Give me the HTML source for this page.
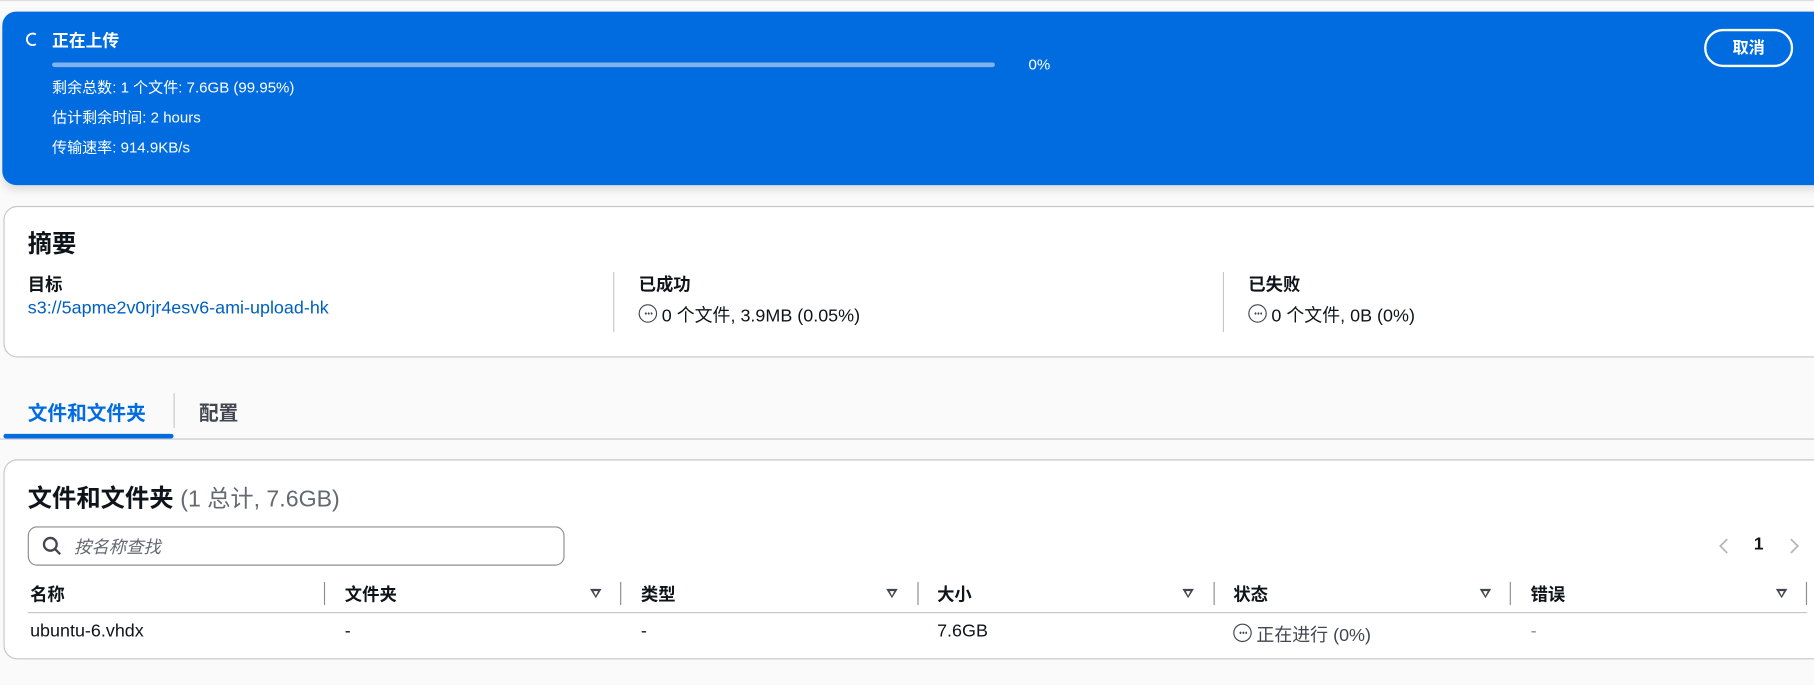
<!DOCTYPE html>
<html><head><meta charset="utf-8"><style>
*{box-sizing:border-box;margin:0;padding:0}
html,body{width:1814px;height:684px;overflow:hidden;background:#fafafa}
#w{position:absolute;left:0;top:0;width:1568px;height:592px;transform:scale(1.15689);transform-origin:0 0;font-family:"Liberation Sans","Noto Sans CJK SC",sans-serif;color:#0f141a}
.a{position:absolute;white-space:nowrap}
.banner{position:absolute;left:2px;top:10px;width:1580px;height:150px;background:#006ce0;border-radius:12px;box-shadow:0 4px 8px rgba(0,0,0,.12)}
.wt{color:#fff;font-size:13px}
.card{position:absolute;left:3px;width:1580px;background:#fff;border:1px solid #c6c6cd;border-radius:12px}
.lbl{font-size:15px;font-weight:bold}
.val{font-size:15.5px}
.vd{position:absolute;width:1px;background:#c6c6cd}
.th{font-size:15px;font-weight:bold;top:503px}
.tri{position:absolute;top:509px;width:0;height:0;border-left:5px solid transparent;border-right:5px solid transparent;border-top:8px solid #424650}
.tri:after{content:"";position:absolute;left:-2.5px;top:-6.5px;border-left:2.5px solid transparent;border-right:2.5px solid transparent;border-top:4px solid #fff}
.td{font-size:15.5px;top:537px}
.wi{padding-left:20px}
.ic{position:absolute;left:0;top:2px;display:flex;align-items:center;justify-content:center;width:16px;height:16px;border:1.5px solid #424650;border-radius:50%}
.ic i{display:block;width:7px;height:2px;background:radial-gradient(circle,#424650 0.9px,transparent 1px) 0 0/2.5px 2px repeat-x}
</style></head><body><div id="w">
<div style="position:absolute;left:0;top:0;width:1568px;height:1px;background:#ddd"></div>
<div class="banner"></div>
<svg class="a" style="left:21px;top:27px" width="14" height="14" viewBox="0 0 14 14"><path d="M10 2.8 A5 5 0 1 0 10 11.2" fill="none" stroke="#fff" stroke-width="1.6"/></svg>
<div class="a" style="left:45px;top:24px;color:#fff;font-size:14.5px;font-weight:bold">正在上传</div>
<div class="a" style="left:45px;top:54px;width:815px;height:4px;background:#7fb2ee;border-radius:2px"></div>
<div class="a wt" style="left:889px;top:48px">0%</div>
<div class="a wt" style="left:45px;top:65px">剩余总数: 1 个文件: 7.6GB (99.95%)</div>
<div class="a wt" style="left:45px;top:91px">估计剩余时间: 2 hours</div>
<div class="a wt" style="left:45px;top:117px">传输速率: 914.9KB/s</div>
<div class="a" style="left:1473px;top:25px;width:77px;height:33px;border:2px solid #fff;border-radius:17px;color:#fff;font-size:14px;font-weight:bold;text-align:center;line-height:29px">取消</div>

<div class="card" style="top:178px;height:131px"></div>
<div class="a" style="left:24px;top:195px;font-size:21px;font-weight:bold">摘要</div>
<div class="a lbl" style="left:24px;top:235px">目标</div>
<div class="a val" style="left:24px;top:258px;color:#0060c0">s3://5apme2v0rjr4esv6-ami-upload-hk</div>
<div class="vd" style="left:530px;top:235px;height:52px"></div>
<div class="a lbl" style="left:552px;top:235px">已成功</div>
<div class="a val wi" style="left:552px;top:261px"><span class="ic"><i></i></span>0 个文件, 3.9MB (0.05%)</div>
<div class="vd" style="left:1057px;top:235px;height:52px"></div>
<div class="a lbl" style="left:1079px;top:235px">已失败</div>
<div class="a val wi" style="left:1079px;top:261px"><span class="ic"><i></i></span>0 个文件, 0B (0%)</div>

<div class="a" style="left:24px;top:343px;font-size:17px;font-weight:bold;color:#006ce0">文件和文件夹</div>
<div class="a" style="left:3px;top:375px;width:147px;height:4px;background:#006ce0;border-radius:2px"></div>
<div class="vd" style="left:150px;top:340px;height:30px"></div>
<div class="a" style="left:172px;top:343px;font-size:17px;font-weight:bold;color:#424650">配置</div>
<div class="a" style="left:0;top:379px;width:1568px;height:1px;background:#c6c6cd"></div>

<div class="card" style="top:397px;height:173px"></div>
<div class="a" style="left:24px;top:415px;font-size:21px;font-weight:bold">文件和文件夹 <span style="font-weight:normal;color:#656871;font-size:20px">(1 总计, 7.6GB)</span></div>
<div class="a" style="left:24px;top:455px;width:464px;height:34px;border:1px solid #8c8c94;border-radius:8px"></div>
<svg class="a" style="left:36px;top:463px" width="18" height="18" viewBox="0 0 18 18"><circle cx="7.5" cy="7.5" r="5.5" fill="none" stroke="#424650" stroke-width="2"/><path d="M11.5 11.5 L16 16" stroke="#424650" stroke-width="2"/></svg>
<div class="a" style="left:64px;top:462px;font-size:15px;font-style:italic;color:#656871">按名称查找</div>
<svg class="a" style="left:1485px;top:464px" width="10" height="16" viewBox="0 0 10 16"><path d="M8 2 L2 8 L8 14" fill="none" stroke="#b4b4bb" stroke-width="1.5"/></svg>
<div class="a" style="left:1516px;top:462px;font-size:15px;font-weight:bold">1</div>
<svg class="a" style="left:1546px;top:464px" width="10" height="16" viewBox="0 0 10 16"><path d="M2 2 L8 8 L2 14" fill="none" stroke="#b4b4bb" stroke-width="1.5"/></svg>

<div class="a th" style="left:26px">名称</div>
<div class="vd" style="left:280px;top:503px;height:20px;background:#8c8c94"></div>
<div class="a th" style="left:298px">文件夹</div><div class="tri" style="left:510px"></div>
<div class="vd" style="left:536px;top:503px;height:20px;background:#8c8c94"></div>
<div class="a th" style="left:554px">类型</div><div class="tri" style="left:766px"></div>
<div class="vd" style="left:793px;top:503px;height:20px;background:#8c8c94"></div>
<div class="a th" style="left:810px">大小</div><div class="tri" style="left:1022px"></div>
<div class="vd" style="left:1049px;top:503px;height:20px;background:#8c8c94"></div>
<div class="a th" style="left:1066px">状态</div><div class="tri" style="left:1279px"></div>
<div class="vd" style="left:1305px;top:503px;height:20px;background:#8c8c94"></div>
<div class="a th" style="left:1323px">错误</div><div class="tri" style="left:1535px"></div>
<div class="vd" style="left:1561px;top:503px;height:20px;background:#8c8c94"></div>
<div class="a" style="left:24px;top:529px;width:1538px;height:1px;background:#c6c6cd"></div>
<div class="a td" style="left:26px">ubuntu-6.vhdx</div>
<div class="a td" style="left:298px">-</div>
<div class="a td" style="left:554px">-</div>
<div class="a td" style="left:810px">7.6GB</div>
<div class="a td wi" style="left:1066px"><span class="ic"><i></i></span><span style="color:#424650">正在进行 (0%)</span></div>
<div class="a td" style="left:1323px;color:#8c8c94">-</div>
</div></body></html>
